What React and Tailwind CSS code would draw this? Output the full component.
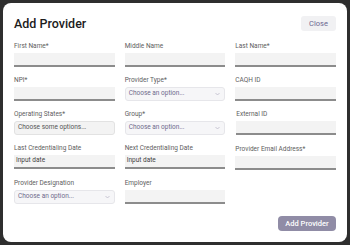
import React from "react";

const font = { fontFamily: "Roboto, 'Liberation Sans', sans-serif" };

function Label({ children, className = "" }) {
  return <div className={`text-[6.5px] leading-[8px] text-[#5e5e5e] mb-[3px] ${className}`}>{children}</div>;
}

function TextInput({ placeholder }) {
  return (
    <div className="h-[14px] bg-[#f3f3f3] border-b-2 border-[#8c8c8c] flex items-center px-[2px] text-[6.5px] text-[#444]">
      {placeholder}
    </div>
  );
}

function SelectInput({ placeholder }) {
  return (
    <div className="h-[14px] bg-[#f6f6f8] border border-[#e6e6ea] rounded-[3px] flex items-center justify-between px-[3px] text-[6.5px] text-[#6e6a8c]">
      <span>{placeholder}</span>
      <svg width="5" height="4" viewBox="0 0 10 6" className="mr-[1px]">
        <path d="M1 1l4 4 4-4" fill="none" stroke="#b4b2c4" strokeWidth="1.4" />
      </svg>
    </div>
  );
}

function MultiInput({ placeholder }) {
  return (
    <div className="h-[14px] bg-[#f3f3f3] border border-[#e2e2e2] rounded-[3px] flex items-center px-[3px] text-[6.5px] text-[#555]">
      {placeholder}
    </div>
  );
}

function Field({ label, children, className = "" }) {
  return (
    <div className={className}>
      <Label>{label}</Label>
      {children}
    </div>
  );
}

export default function App() {
  return (
    <div className="w-[350px] h-[245px] bg-[#2e2e2e] p-[3px]" style={font}>
      <div className="w-full h-full bg-white rounded-[8px] px-[11px] pt-[12px] flex flex-col">
        <div className="flex items-center justify-between">
          <h2 className="text-[12.5px] font-medium text-[#1c1c1c] leading-[16px] mt-[1px]">Add Provider</h2>
          <button className="h-[15px] w-[35px] bg-[#f1f1f3] rounded-[3px] text-[7.5px] text-[#6c6890]">Close</button>
        </div>

        <div className="grid grid-cols-3 gap-x-[10px] gap-y-[9px] mt-[10px]">
          <Field label="First Name*"><TextInput /></Field>
          <Field label="Middle Name"><TextInput /></Field>
          <Field label="Last Name*"><TextInput /></Field>

          <Field label="NPI*"><TextInput /></Field>
          <Field label="Provider Type*"><SelectInput placeholder="Choose an option..." /></Field>
          <Field label="CAQH ID"><TextInput /></Field>

          <Field label="Operating States*"><MultiInput placeholder="Choose some options..." /></Field>
          <Field label="Group*"><SelectInput placeholder="Choose an option..." /></Field>
          <Field label="External ID" className="pl-[1px]"><TextInput /></Field>

          <Field label="Last Credentialing Date"><TextInput placeholder="Input date" /></Field>
          <Field label="Next Credentialing Date"><TextInput placeholder="Input date" /></Field>
          <Field label="Provider Email Address*" className="mt-[1px]"><TextInput /></Field>

          <Field label="Provider Designation"><SelectInput placeholder="Choose an option..." /></Field>
          <Field label="Employer"><TextInput /></Field>
          <div />
        </div>

        <div className="flex justify-end mt-[12px]">
          <button className="h-[15px] w-[58px] bg-[#908ca6] rounded-[4px] text-[7.5px] font-medium text-white">Add Provider</button>
        </div>
      </div>
    </div>
  );
}
